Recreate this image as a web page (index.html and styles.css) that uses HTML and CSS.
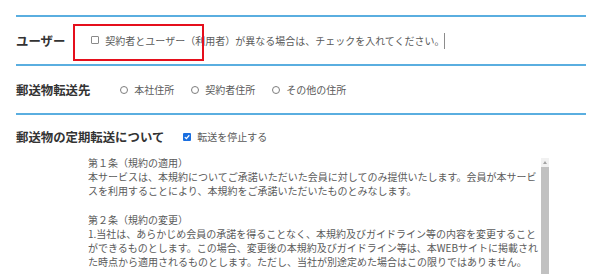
FILE: index.html
```html
<!DOCTYPE html>
<html lang="ja">
<head>
<meta charset="utf-8">
<link rel="stylesheet" href="styles.css">
</head>
<body>
<div class="form">
  <div class="row row-user">
    <div class="label">ユーザー</div>
    <div class="field">
      <span class="check"></span>
      <span class="opt-text">契約者とユーザー（利用者）が異なる場合は、チェックを入れてください。</span>
      <span class="caret"></span>
    </div>
    <div class="highlight"></div>
  </div>
  <div class="row row-forward">
    <div class="label">郵送物転送先</div>
    <div class="field radios">
      <span class="radio-item"><span class="radio"></span><span class="opt-text">本社住所</span></span>
      <span class="radio-item"><span class="radio"></span><span class="opt-text">契約者住所</span></span>
      <span class="radio-item"><span class="radio"></span><span class="opt-text">その他の住所</span></span>
    </div>
  </div>
  <div class="row-periodic">
    <div class="periodic-head">
      <div class="label">郵送物の定期転送について</div>
      <div class="field">
        <span class="check checked"><svg viewBox="0 0 8 8" width="8" height="8"><path d="M1.8 4.1 L3.4 5.6 L6.3 2.3" fill="none" stroke="#fff" stroke-width="1.3"/></svg></span>
        <span class="opt-text">転送を停止する</span>
      </div>
    </div>
    <div class="terms">
      <div class="terms-text">
        <p>第１条（規約の適用）<br>本サービスは、本規約についてご承諾いただいた会員に対してのみ提供いたします。会員が本サービスを利用することにより、本規約をご承諾いただいたものとみなします。</p>
        <p>第２条（規約の変更）<br>1.当社は、あらかじめ会員の承諾を得ることなく、本規約及びガイドライン等の内容を変更することができるものとします。この場合、変更後の本規約及びガイドライン等は、本WEBサイトに掲載された時点から適用されるものとします。ただし、当社が別途定めた場合はこの限りではありません。</p>
      </div>
      <div class="scrollbar">
        <div class="scroll-btn"><span class="tri"></span></div>
        <div class="scroll-thumb"></div>
      </div>
    </div>
  </div>
</div>
</body>
</html>
```

FILE: styles.css
```css
html, body {
  margin: 0;
  padding: 0;
  background: #fff;
}
body {
  font-family: "Noto Sans CJK JP", "Noto Sans", sans-serif;
  color: #5a5a5a;
  height: 274px;
  overflow: hidden;
}
.form {
  margin: 0 14px 0 16px;
  padding-top: 15px;
}
.row {
  position: relative;
  box-sizing: border-box;
  height: 49px;
  border-top: 2px solid #5aaee0;
  display: flex;
  align-items: center;
}
.label {
  font-size: 12.4px;
  font-weight: bold;
  color: #333;
  line-height: 18px;
  white-space: nowrap;
}
.field {
  display: flex;
  align-items: center;
  font-size: 10px;
  line-height: 14px;
  white-space: nowrap;
}
.row-user .field { margin-left: 26px; }
.row-forward .field { margin-left: 30px; }
.opt-text { color: #5a5a5a; }
.check {
  box-sizing: border-box;
  width: 8px;
  height: 8px;
  border: 1px solid #8a8a8a;
  border-radius: 1px;
  margin-right: 6px;
  margin-top: -2px;
  display: inline-flex;
}
.check.checked {
  border: none;
  background: #1a6fe0;
  margin-top: -1px;
}
.caret {
  width: 1px;
  height: 16px;
  background: #8c8c8c;
  margin-left: -1px;
}
.highlight {
  position: absolute;
  left: 57px;
  top: 7px;
  width: 131px;
  height: 37px;
  box-sizing: border-box;
  border: 2.5px solid #e50f1c;
}
.radios { gap: 17px; }
.radio-item { display: inline-flex; align-items: center; }
.radio {
  box-sizing: border-box;
  width: 8px;
  height: 8px;
  border: 1px solid #7d7d7d;
  border-radius: 50%;
  margin-right: 6px;
}
.row-periodic {
  border-top: 2px solid #5aaee0;
}
.periodic-head {
  display: flex;
  align-items: center;
  padding-top: 13px;
}
.periodic-head .field { margin-left: 19px; }
.terms {
  margin: 10px 0 0 72px;
  width: 461px;
  height: 130px;
  display: flex;
  overflow: hidden;
}
.terms-text {
  width: 453px;
  font-size: 10px;
  line-height: 14.2px;
  color: #5a5a5a;
}
.terms-text p { margin: 0 0 14.2px 0; }
.scrollbar {
  width: 8px;
  margin-top: 2px;
  display: flex;
  flex-direction: column;
  background: #f1f1f1;
}
.scroll-btn {
  height: 9px;
  display: flex;
  align-items: center;
  justify-content: center;
}
.tri {
  width: 0;
  height: 0;
  border-left: 2.5px solid transparent;
  border-right: 2.5px solid transparent;
  border-bottom: 3px solid #a3a3a3;
}
.scroll-thumb {
  flex: 1;
  background: #c1c1c1;
}
```
